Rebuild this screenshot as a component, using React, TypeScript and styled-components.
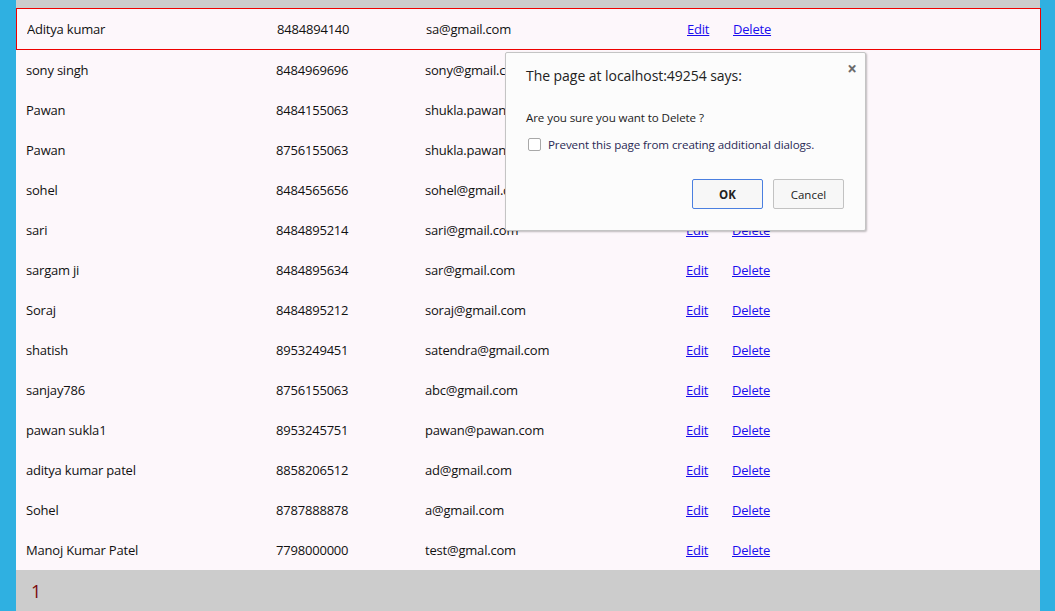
import React from "react";
import styled, { createGlobalStyle } from "styled-components";

const Global = createGlobalStyle`
  html, body { margin: 0; padding: 0; }
  body { background: #2fb0e1; font-family: "Open Sans", "Noto Sans", sans-serif; }
`;

const Page = styled.div`
  position: relative;
  width: 1055px;
  height: 611px;
  box-sizing: border-box;
  padding: 0 15px 0 16px;
  background: #2fb0e1;
  overflow: hidden;
`;

const Panel = styled.div`
  background: #cccccc;
  padding-top: 8px;
  display: flex;
  flex-direction: column;
  height: 611px;
`;

const Table = styled.div`
  display: flex;
  flex-direction: column;
  background: #fdf7fb;
`;

const Row = styled.div<{ $selected?: boolean }>`
  display: grid;
  grid-template-columns: 250px 149px 261px 46px 1fr;
  align-items: center;
  height: 40px;
  padding-left: 10px;
  font-size: 13px;
  color: #111;
  border: ${(p) => (p.$selected ? "1px solid #ee0000" : "none")};
  margin-right: ${(p) => (p.$selected ? "-1px" : "0")};
`;

const Cell = styled.span`
  white-space: nowrap;
  overflow: hidden;
  letter-spacing: -0.2px;
`;

const Link = styled.a`
  color: #1a0dee;
  text-decoration: underline;
  cursor: pointer;
  white-space: nowrap;
  letter-spacing: -0.2px;
`;

const Footer = styled.div`
  height: 41px;
  display: flex;
  align-items: center;
  padding-left: 15px;
  font-size: 18px;
  color: #7a0a0a;
`;

const Dialog = styled.div`
  position: absolute;
  left: 505px;
  top: 52px;
  width: 361px;
  height: 179px;
  box-sizing: border-box;
  background: #fcfcfc;
  border: 1px solid #c4c4c4;
  border-radius: 2px;
  box-shadow: 1px 1px 2px rgba(0, 0, 0, 0.25);
  padding: 13px 20px 0 20px;
  font-family: "Open Sans", "Noto Sans", sans-serif;
  color: #222;
`;

const Title = styled.div`
  font-size: 14px;
  letter-spacing: -0.05px;
`;

const Close = styled.div`
  position: absolute;
  right: 8px;
  top: 4px;
  font-size: 17px;
  color: #6b6b6b;
  font-weight: bold;
`;

const Message = styled.div`
  font-size: 11.6px;
  margin-top: 25px;
  letter-spacing: -0.1px;
`;

const CheckRow = styled.label`
  display: flex;
  align-items: center;
  gap: 7px;
  margin-top: 12px;
  font-size: 11.6px;
  color: #2a2a55;
  letter-spacing: -0.1px;
`;

const Box = styled.span`
  width: 11px;
  height: 11px;
  border: 1px solid #a8a8a8;
  border-radius: 2px;
  background: #fff;
  margin-left: 2px;
`;

const Buttons = styled.div`
  display: flex;
  justify-content: flex-end;
  gap: 10px;
  margin-top: 27px;
  margin-right: 1px;
`;

const Button = styled.button<{ $primary?: boolean }>`
  width: 71px;
  height: 30px;
  box-sizing: border-box;
  background: #f7f7f7;
  border: 1px solid ${(p) => (p.$primary ? "#4a7fe0" : "#c2c2c2")};
  border-radius: 2px;
  font-family: "Open Sans", "Noto Sans", sans-serif;
  font-size: 11.5px;
  font-weight: ${(p) => (p.$primary ? 700 : 400)};
  color: #222;
  padding: 0;
`;

const rows = [
  ["Aditya kumar", "8484894140", "sa@gmail.com"],
  ["sony singh", "8484969696", "sony@gmail.com"],
  ["Pawan", "8484155063", "shukla.pawan@gmail.com"],
  ["Pawan", "8756155063", "shukla.pawan@gmail.com"],
  ["sohel", "8484565656", "sohel@gmail.com"],
  ["sari", "8484895214", "sari@gmail.com"],
  ["sargam ji", "8484895634", "sar@gmail.com"],
  ["Soraj", "8484895212", "soraj@gmail.com"],
  ["shatish", "8953249451", "satendra@gmail.com"],
  ["sanjay786", "8756155063", "abc@gmail.com"],
  ["pawan sukla1", "8953245751", "pawan@pawan.com"],
  ["aditya kumar patel", "8858206512", "ad@gmail.com"],
  ["Sohel", "8787888878", "a@gmail.com"],
  ["Manoj Kumar Patel", "7798000000", "test@gmal.com"],
];

export default function App() {
  return (
    <>
      <Global />
      <Page>
        <Panel>
          <Table>
            {rows.map((r, i) => (
              <Row key={i} $selected={i === 0}>
                <Cell>{r[0]}</Cell>
                <Cell>{r[1]}</Cell>
                <Cell>{r[2]}</Cell>
                <Link>Edit</Link>
                <Link>Delete</Link>
              </Row>
            ))}
          </Table>
          <Footer>1</Footer>
        </Panel>
        <Dialog>
          <Close>×</Close>
          <Title>The page at localhost:49254 says:</Title>
          <Message>Are you sure you want to Delete ?</Message>
          <CheckRow>
            <Box />
            Prevent this page from creating additional dialogs.
          </CheckRow>
          <Buttons>
            <Button $primary>OK</Button>
            <Button>Cancel</Button>
          </Buttons>
        </Dialog>
      </Page>
    </>
  );
}
